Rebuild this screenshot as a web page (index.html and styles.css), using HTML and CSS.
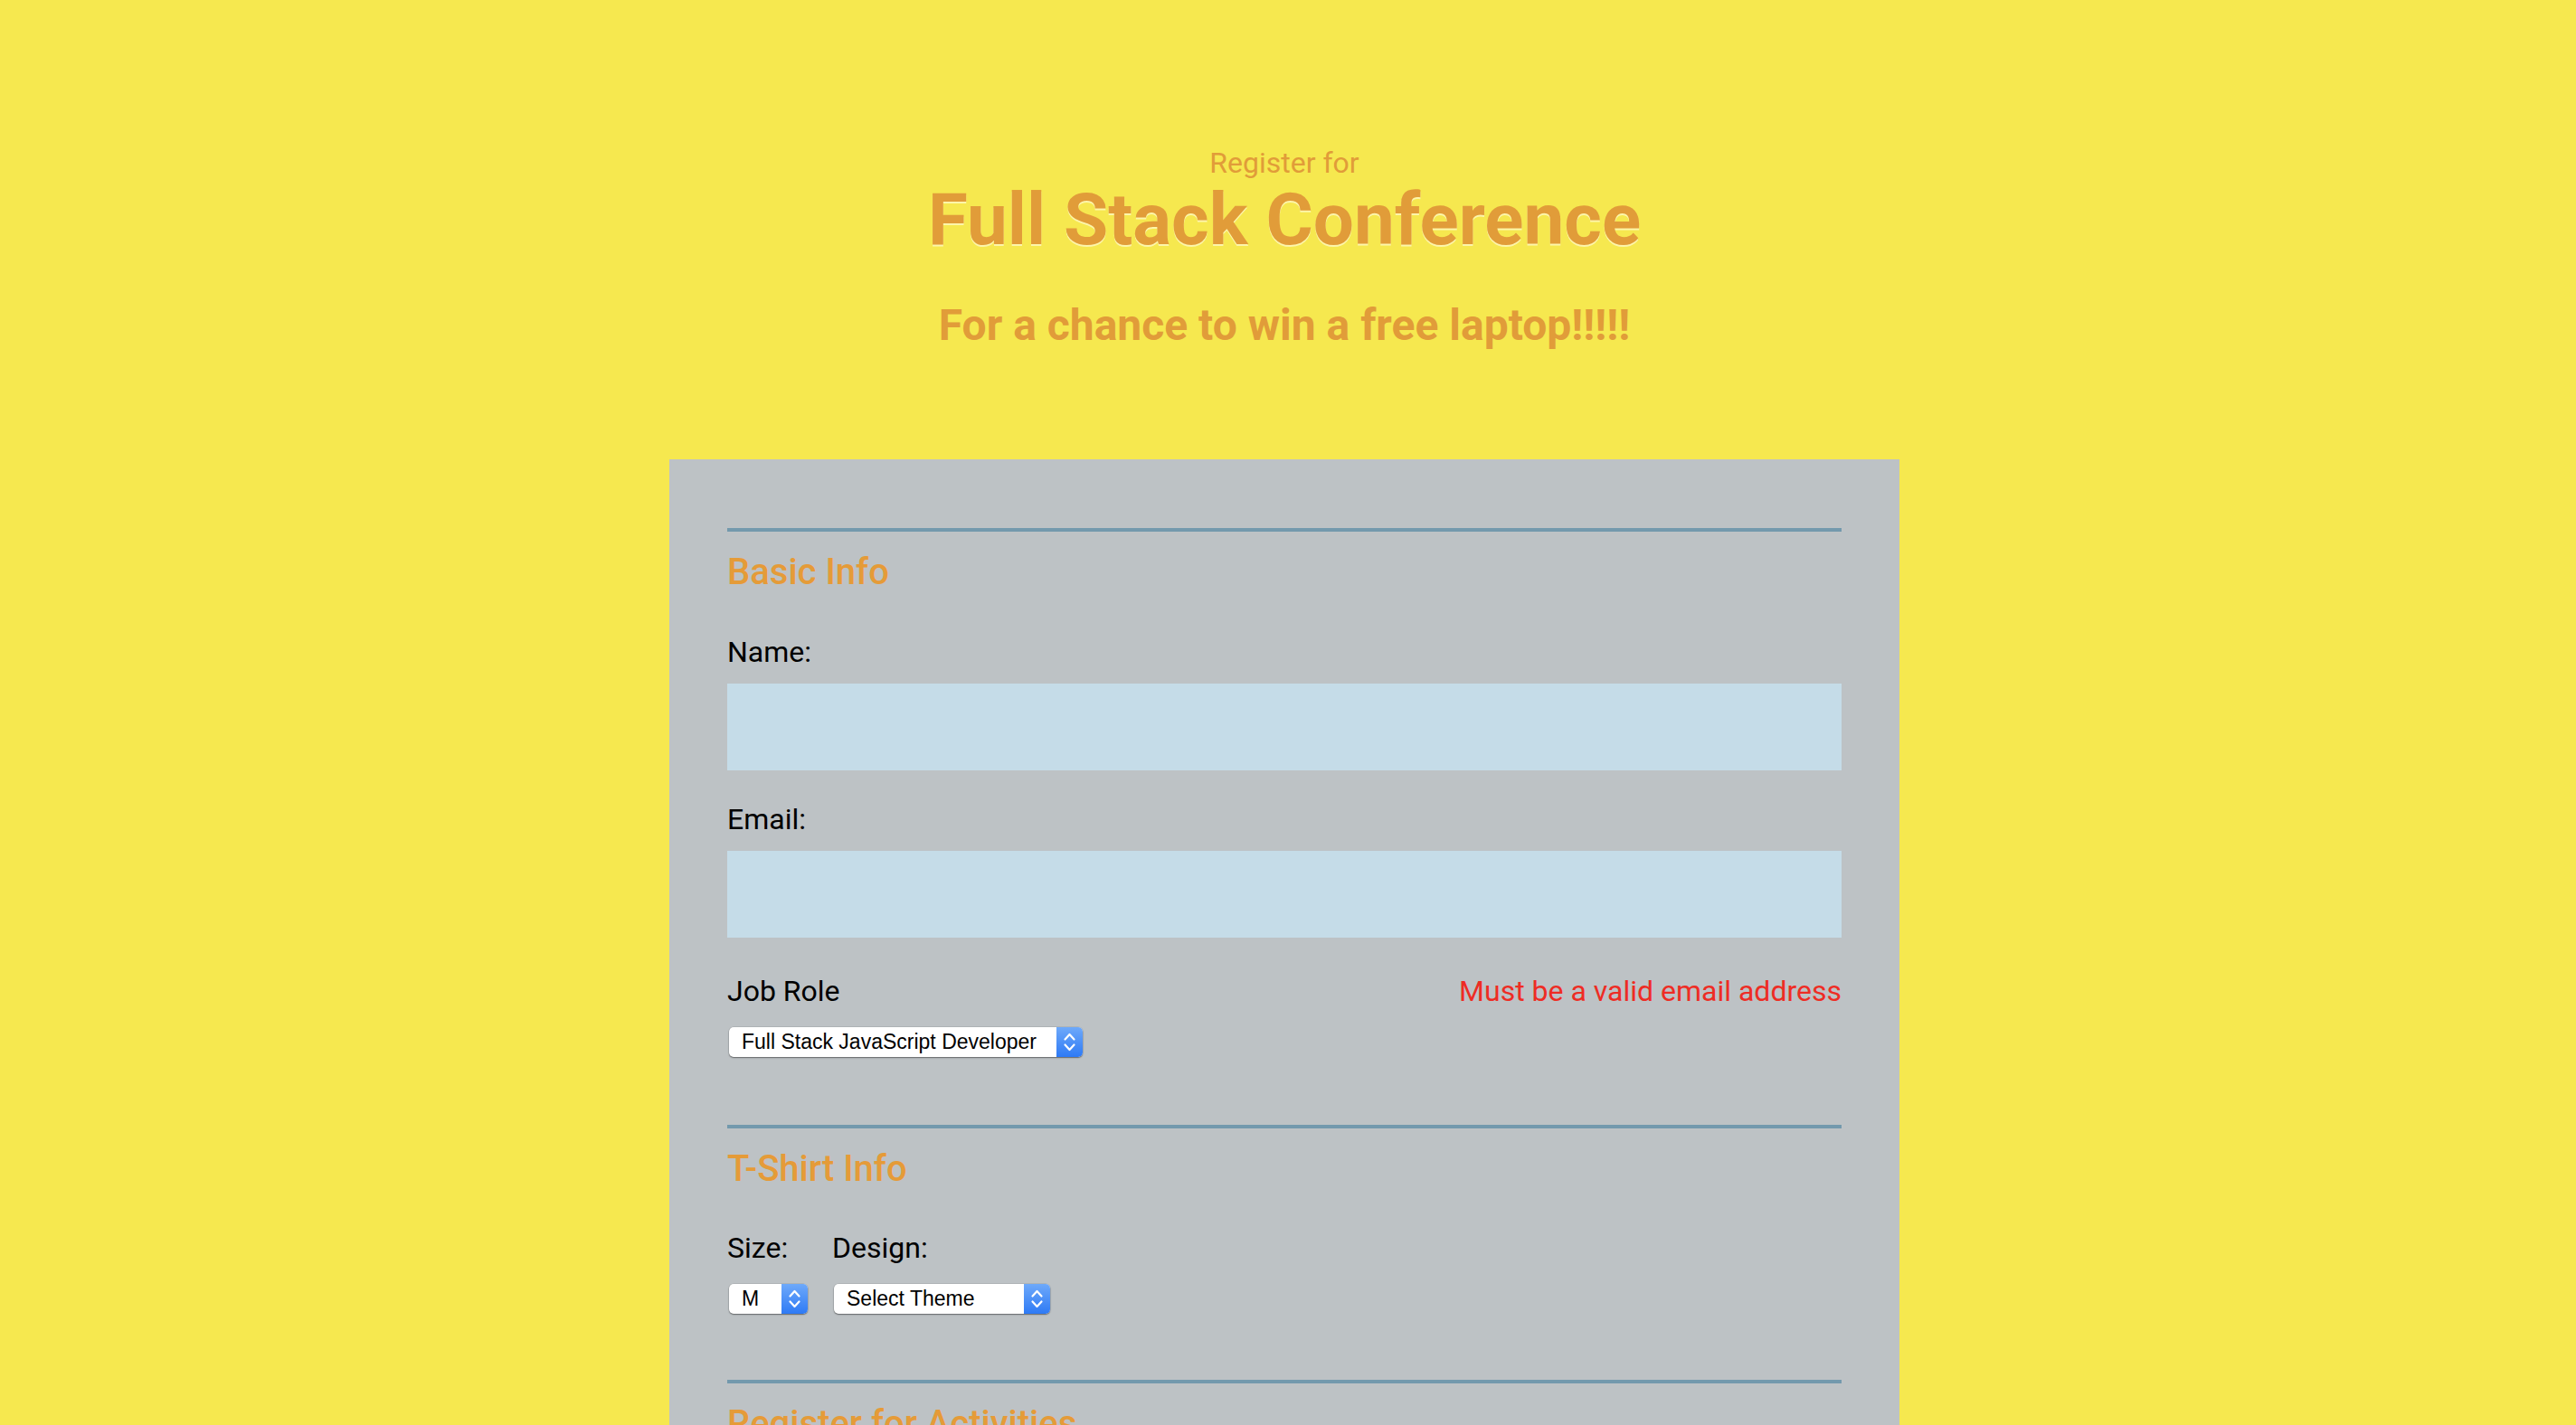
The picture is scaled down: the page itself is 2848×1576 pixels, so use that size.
FILE: index.html
```html
<!DOCTYPE html>
<html lang="en">
<head>
<meta charset="utf-8">
<title>Full Stack Conference</title>
<link rel="stylesheet" href="styles.css">
</head>
<body>
<div class="page">
  <header class="masthead">
    <p class="pre">Register for</p>
    <h1 class="title">Full Stack Conference</h1>
    <h2 class="tagline">For a chance to win a free laptop!!!!!</h2>
  </header>

  <form class="panel">
    <section class="section section-basic">
      <h3 class="legend">Basic Info</h3>
      <label class="label label-first" for="name">Name:</label>
      <input class="field" id="name" type="text">
      <label class="label label-next" for="mail">Email:</label>
      <input class="field" id="mail" type="text">
      <div class="role-row">
        <span class="label">Job Role</span>
        <span class="error">Must be a valid email address</span>
      </div>
      <div class="select select-role">
        <span class="select-value">Full Stack JavaScript Developer</span>
        <span class="select-arrows">
          <svg width="29" height="33" viewBox="0 0 29 33"><polyline points="9.5,13.5 14.5,8 19.5,13.5" fill="none" stroke="#fff" stroke-width="2.2" stroke-linecap="round" stroke-linejoin="round"/><polyline points="9.5,19.5 14.5,25 19.5,19.5" fill="none" stroke="#fff" stroke-width="2.2" stroke-linecap="round" stroke-linejoin="round"/></svg>
        </span>
      </div>
    </section>

    <section class="section section-shirt">
      <h3 class="legend">T-Shirt Info</h3>
      <div class="shirt-row">
        <div class="shirt-col col-size">
          <span class="label">Size:</span>
          <div class="select select-size">
            <span class="select-value">M</span>
            <span class="select-arrows">
              <svg width="29" height="33" viewBox="0 0 29 33"><polyline points="9.5,13.5 14.5,8 19.5,13.5" fill="none" stroke="#fff" stroke-width="2.2" stroke-linecap="round" stroke-linejoin="round"/><polyline points="9.5,19.5 14.5,25 19.5,19.5" fill="none" stroke="#fff" stroke-width="2.2" stroke-linecap="round" stroke-linejoin="round"/></svg>
            </span>
          </div>
        </div>
        <div class="shirt-col col-design">
          <span class="label">Design:</span>
          <div class="select select-design">
            <span class="select-value">Select Theme</span>
            <span class="select-arrows">
              <svg width="29" height="33" viewBox="0 0 29 33"><polyline points="9.5,13.5 14.5,8 19.5,13.5" fill="none" stroke="#fff" stroke-width="2.2" stroke-linecap="round" stroke-linejoin="round"/><polyline points="9.5,19.5 14.5,25 19.5,19.5" fill="none" stroke="#fff" stroke-width="2.2" stroke-linecap="round" stroke-linejoin="round"/></svg>
            </span>
          </div>
        </div>
      </div>
    </section>

    <section class="section section-activities">
      <h3 class="legend">Register for Activities</h3>
    </section>
  </form>
</div>
</body>
</html>
```

FILE: styles.css
```css
html, body {
  margin: 0;
  padding: 0;
  overflow: hidden;
}

body {
  background: #f6e84f;
  font-family: Roboto, "Liberation Sans", sans-serif;
  color: #000;
}

.page {
  padding-right: 8px;
}

.masthead {
  text-align: center;
  color: #e19c39;
  padding-top: 164px;
}

.pre {
  margin: 0;
  font-size: 32px;
  line-height: 32px;
  font-weight: 400;
}

.title {
  margin: 7px 0 0;
  font-size: 80px;
  line-height: 80px;
  font-weight: 700;
  text-shadow: 0 2px 0 rgba(255, 250, 200, 0.75);
}

.tagline {
  margin: 53px 0 0;
  font-size: 48px;
  line-height: 48px;
  font-weight: 700;
}

.panel {
  width: 1232px;
  margin: 124px auto 0;
  padding: 76px 64px 0;
  background: #bdc2c5;
  min-height: 1000px;
}

.section {
  border-top: 4px solid #7399ad;
  display: flex;
  flex-direction: column;
  align-items: flex-start;
}

.section-basic {
  padding-bottom: 75px;
}

.section-shirt {
  padding-bottom: 73px;
}

.legend {
  margin: 25px 0 0;
  font-size: 40px;
  line-height: 40px;
  font-weight: 500;
  color: #e59b38;
}

.label {
  display: block;
  font-size: 32px;
  line-height: 32px;
  font-weight: 400;
}

.label-first {
  margin-top: 52px;
}

.label-next {
  margin-top: 38px;
}

.field {
  display: block;
  box-sizing: border-box;
  width: 100%;
  height: 96px;
  margin: 19px 0 0;
  border: 0;
  padding: 0 16px;
  background: #c5dce8;
  font: inherit;
}

.role-row {
  align-self: stretch;
  display: flex;
  justify-content: space-between;
  margin-top: 43px;
}

.error {
  font-size: 32px;
  line-height: 32px;
  color: #ee2c24;
}

.select {
  display: flex;
  height: 33px;
  margin-left: 2px;
  border-radius: 5px;
  background: #fff;
  box-shadow: 0 1px 1.5px rgba(0, 0, 0, 0.45), 0 0 0 0.5px rgba(0, 0, 0, 0.12);
}

.select-role {
  width: 391px;
  margin-top: 24px;
}

.select-size {
  width: 87px;
}

.select-design {
  width: 239px;
}

.select-value {
  flex: 1;
  padding-left: 14px;
  font-family: "Liberation Sans", Arial, sans-serif;
  font-size: 23px;
  line-height: 33px;
  color: #000;
  white-space: nowrap;
}

.select-arrows {
  width: 29px;
  height: 33px;
  border-radius: 0 5px 5px 0;
  background: linear-gradient(#6ea9fa, #2e7af5);
}

.select-arrows svg {
  display: block;
}

.shirt-row {
  display: flex;
  gap: 27px;
  margin-top: 51px;
}

.shirt-col {
  display: flex;
  flex-direction: column;
  align-items: flex-start;
}

.col-size {
  width: 89px;
}

.shirt-col .select {
  margin-top: 24px;
}
```
